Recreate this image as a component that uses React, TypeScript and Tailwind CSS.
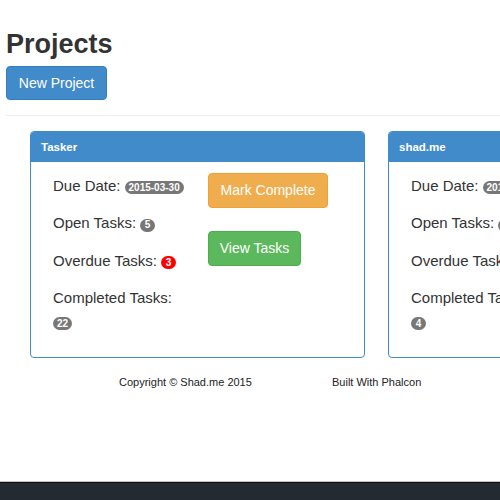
const projects = [
  { name: "Tasker", due: "2015-03-30", open: 5, overdue: 3, completed: 22 },
  { name: "shad.me", due: "2015-04-15", open: 2, overdue: 1, completed: 4 },
];

function Badge({ children, red = false }: { children: React.ReactNode; red?: boolean }) {
  return (
    <span
      className={`inline-block min-w-[15px] rounded-full px-1 py-[1.5px] text-center text-[10px] font-bold leading-[10px] text-white ${
        red ? "bg-[#f00]" : "bg-[#777]"
      }`}
    >
      {children}
    </span>
  );
}

function ProjectPanel({ p }: { p: (typeof projects)[number] }) {
  return (
    <div className="w-[335px] shrink-0 rounded-[4px] border border-[#428bca]">
      <div className="h-[30px] rounded-t-[3px] bg-[#428bca] pl-[10px] text-[11.5px] font-bold leading-[30px] text-white">
        {p.name}
      </div>
      <div className="flex pb-[27px] pl-[22px]">
        <div className="flex w-[155px] shrink-0 flex-col gap-[17.6px] pt-[13.5px] text-[15px] leading-[20px]">
          <div className="flex items-baseline gap-1 whitespace-nowrap">
            Due Date: <Badge>{p.due}</Badge>
          </div>
          <div className="flex items-baseline gap-1 whitespace-nowrap">
            Open Tasks: <Badge>{p.open}</Badge>
          </div>
          <div className="flex items-baseline gap-1 whitespace-nowrap">
            Overdue Tasks: <Badge red>{p.overdue}</Badge>
          </div>
          <div className="whitespace-nowrap">
            Completed Tasks:
            <div className="mt-[9px] flex">
              <Badge>{p.completed}</Badge>
            </div>
          </div>
        </div>
        <div className="flex shrink-0 flex-col items-start gap-[23px] pt-[11.3px] text-[14px] text-white">
          <button className="h-[35px] w-[120px] rounded-[4px] border border-[#eea236] bg-[#f0ad4e]">
            Mark Complete
          </button>
          <button className="h-[35px] w-[93px] rounded-[4px] border border-[#4cae4c] bg-[#5cb85c]">
            View Tasks
          </button>
        </div>
      </div>
    </div>
  );
}

export default function App() {
  return (
    <div className="flex h-[500px] w-[500px] flex-col overflow-hidden bg-white font-['Liberation_Sans',Arial,sans-serif] text-[#333]">
      <div className="pl-[6px]">
        <h1 className="pt-[28px] text-[27px] font-bold leading-[32px]">Projects</h1>
        <button className="mt-[6px] h-[34px] w-[101px] rounded-[4px] border border-[#357ebd] bg-[#428bca] text-[14px] text-white">
          New Project
        </button>
        <div className="mt-[15px] h-px bg-[#eee]" />
        <div className="ml-[24px] mt-[15px] flex gap-[23px]">
          {projects.map((p) => (
            <ProjectPanel key={p.name} p={p} />
          ))}
        </div>
      </div>

      {/* footer */}
      <div className="mt-[16px] flex pl-[119px] text-[11px] leading-[16px] text-[#222]">
        <span className="w-[213px]">Copyright © Shad.me 2015</span>
        <span>Built With Phalcon</span>
      </div>

      <div className="mt-auto h-[19px] border-t border-[#c4c4c4] bg-[#232a32] shadow-[inset_0_1px_0_#111]" />
    </div>
  );
}
